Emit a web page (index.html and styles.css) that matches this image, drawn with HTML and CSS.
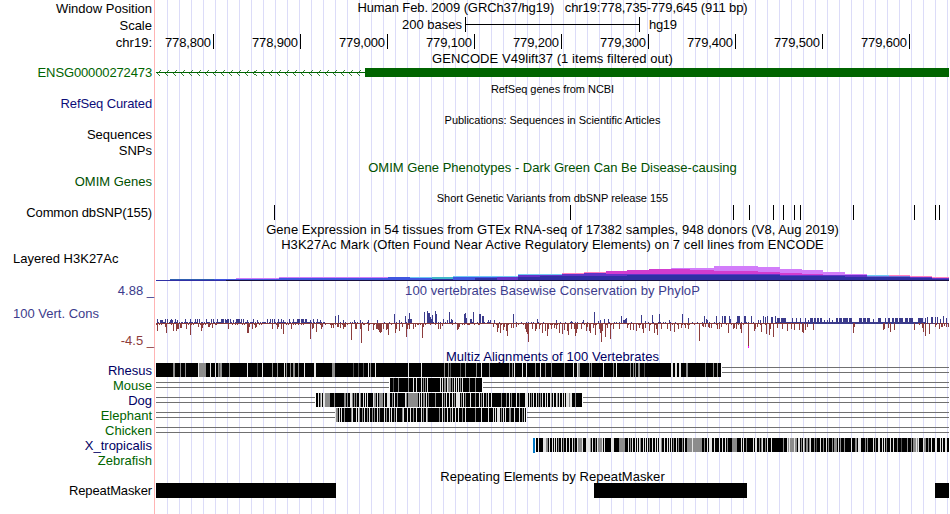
FILE: index.html
```html
<!DOCTYPE html>
<html lang="en">
<head>
<meta charset="utf-8">
<title>Human hg19 chr19:778,735-779,645</title>
<link rel="stylesheet" href="styles.css">
</head>
<body>
<main class="browser" id="browser"></main>
<script src="tracks.js"></script>
</body>
</html>
```
FILE: styles.css
```css
* { box-sizing: border-box; }
body {
  margin: 0;
  background: #fff;
  color: #000;
  font-family: "Liberation Sans", Arial, sans-serif;
  font-size: 13px;
}
.browser {
  width: 949px;
  height: 514px;
  overflow: hidden;
  background:
    linear-gradient(#ffb4b4, #ffb4b4) 154px 0 / 1px 100% no-repeat,
    repeating-linear-gradient(90deg, #dcdcf8 0 1px, transparent 1px 12px) 167px 0 / 782px 100% no-repeat;
}
.row {
  display: grid;
  grid-template-columns: 156px 793px;
}
.label {
  display: flex;
  flex-direction: column;
  justify-content: flex-start;
  padding-right: 4px;
  text-align: right;
  white-space: pre;
  line-height: 15px;
}
.label.left { text-align: left; padding-left: 13px; }
.label.spread { justify-content: space-between; padding-top: 8px; padding-right: 2px; }
.track { height: 100%; line-height: 17px; text-align: center; white-space: pre; letter-spacing: 0.06px; }
.track svg { display: block; letter-spacing: 0; }
.track.small { font-size: 11px; letter-spacing: -0.04px; }
.track.upper { line-height: 15px; }
.label.raised { line-height: 13px; }
.label.lowered { line-height: 17px; }
.label.lowest { line-height: 18px; }
.green { color: #006400; }
.omim { color: #005000; }
.refseq { color: #0c0c78; }
.navy { color: #000064; }
.cons { color: #3c3c8c; }
.brown { color: #8c3c3c; text-align: right; }
.label.tight { letter-spacing: -0.13px; }
.track.tight { letter-spacing: -0.09px; }
.track.plain { letter-spacing: 0; }
.limit { padding-right: 2px; }
svg text { font-family: "Liberation Sans", Arial, sans-serif; font-size: 13px; }
```
FILE: tracks.js
```js
const root = document.getElementById('browser');
const rect = (x, y, w, h, c) => `<rect x="${x}" y="${y}" width="${w}" height="${h}" fill="${c}"/>`;
let top_ = 0;

// Adds one row; drawings use image coordinates through the viewBox.
function row(h, label, body, labelClass = '', bodyClass = '') {
  const isDrawing = body.startsWith('<');
  const content = isDrawing
    ? `<svg width="793" height="${h}" viewBox="156 ${top_} 793 ${h}" shape-rendering="crispEdges">${body}</svg>`
    : body;
  root.insertAdjacentHTML('beforeend',
    `<div class="row" style="height:${h}px"><div class="label ${labelClass}">${label}</div><div class="track ${bodyClass}">${content}</div></div>`);
  top_ += h;
}

row(17, 'Window Position', 'Human Feb. 2009 (GRCh37/hg19)   chr19:778,735-779,645 (911 bp)', 'lowest', 'upper tight');
row(17, 'Scale', rect(465, 17, 1, 15, '#000') + rect(465, 24, 174, 1, '#000') + rect(639, 17, 1, 15, '#000') +
  '<text x="402" y="29" textLength="60">200 bases</text><text x="649" y="29" textLength="28">hg19</text>', 'lowered');
let ruler = '';
for (let i = 0; i < 9; i++) {
  const n = 778800 + i * 100, x = 213 + i * 87;
  ruler += `<text x="${x - 48}" y="47" textLength="46">${n.toLocaleString('en-US')}</text>` + rect(x, 34, 1, 15, '#000');
}
row(17, 'chr19:', ruler, 'lowered');
row(15, '', 'GENCODE V49lift37 (1 items filtered out)', '', 'upper');
let gene = rect(156, 72, 210, 1, '#006400') + rect(365, 68, 584, 9, '#006400');
for (let x = 157; x < 362; x += 8) gene += `<path d="M${x + 3.5} 69.5L${x + .5} 72.5L${x + 3.5} 75.5" fill="none" stroke="#006400" stroke-width=".8"/>`;
row(15, 'ENSG00000272473', gene, 'green raised tight');
row(16, '', 'RefSeq genes from NCBI', '', 'small');
row(15, 'RefSeq Curated', '', 'refseq raised tight');
row(16, '', 'Publications: Sequences in Scientific Articles', '', 'small');
row(15, 'Sequences', '', 'raised');
row(16, 'SNPs', '');
row(16, '', 'OMIM Gene Phenotypes - Dark Green Can Be Disease-causing', '', 'omim plain');
row(15, 'OMIM Genes', '', 'omim raised');
row(14, '', 'Short Genetic Variants from dbSNP release 155', '', 'small');
row(17, 'Common dbSNP(155)', [274, 570, 733, 749, 773, 783, 794, 800, 853, 914, 935, 939].map(x => rect(x, 205, 1, 15, '#000')).join(''), 'lowered tight');
row(15, '', 'Gene Expression in 54 tissues from GTEx RNA-seq of 17382 samples, 948 donors (V8, Aug 2019)');
row(14, '', 'H3K27Ac Mark (Often Found Near Active Regulatory Elements) on 7 cell lines from ENCODE');

// Stepped layers: [start, end, top, colour]
const V = '#d27dfa', M = '#d23ccf', P = '#6432c8', N = '#3030a5', B = '#4056e0', C = '#70c8f4', K = '#ff80c0';
row(33, 'Layered H3K27Ac', [
  [170, 214, 279, '#2f5fb0'], [214, 236, 279, B], [236, 279, 278, V], [236, 279, 279, B],
  [279, 388, 277, V], [279, 388, 278, B], [388, 410, 277, B], [410, 432, 277, C], [410, 432, 278, B],
  [432, 453, 277, '#40b8c8'], [432, 453, 279, N], [453, 518, 276, C], [453, 497, 277, B], [475, 518, 278, N], [497, 518, 277, P],
  [518, 562, 274, C], [518, 562, 275, P], [518, 540, 277, N], [540, 562, 276, N],
  [562, 584, 273, K], [562, 584, 274, P], [562, 584, 276, N],
  [584, 606, 272, K], [584, 606, 273, P], [606, 627, 271, M], [627, 649, 270, M], [649, 671, 269, M],
  [671, 714, 268, V], [671, 690, 269, M], [690, 714, 270, M],
  [714, 758, 266, V], [714, 758, 271, M], [758, 780, 267, V], [758, 780, 272, M],
  [780, 802, 269, V], [780, 802, 273, M], [802, 823, 270, V], [802, 823, 274, M],
  [823, 845, 272, V], [823, 845, 275, M], [845, 867, 274, V], [845, 867, 275, M],
  [867, 889, 275, C], [889, 910, 275, K], [910, 932, 276, K], [932, 949, 277, K],
  [606, 780, 274, P], [780, 867, 275, P], [867, 910, 276, '#7070d8'], [910, 932, 277, P], [932, 949, 278, P],
  [584, 627, 276, N], [627, 780, 275, N], [780, 845, 276, N], [845, 910, 277, N], [910, 932, 278, N], [932, 949, 279, N]
].map(([a, b, t, c]) => rect(a, t, b - a, 280 - t, c)).join('') +
  rect(156, 280, 70, 1, N) + rect(226, 280, 723, 1, '#181040'), 'left lowered');
row(15, '4.88 _', '100 vertebrates Basewise Conservation by PhyloP', 'cons limit', 'cons upper');

// Conservation scores: tile origin, then "offset:level" at three units per pixel.
const up = {
  150: '22:178 30:180 33:180 36:180 45:178 52:178 60:180 63:178 66:180 75:178 82:180 105:178 121:178 135:178 142:178 148:178 168:178 184:178 190:178 202:178 214:178 217:178 220:178 226:178 229:180 232:178 235:178 241:178 250:180 259:178 262:178 265:178 268:178 274:178 280:178 292:180 310:178 322:180 352:178 361:178 367:178 373:178 385:178 394:178 400:180 418:178 430:178 442:178 445:178 448:178 454:178 457:178 460:178 466:178 469:178 480:180 490:178 502:178 510:180 556:168 565:165 580:180 613:180 631:180 655:182 682:180 733:162 748:182 766:168 775:178 778:160 781:178 784:178',
  420: '13:158 22:155 25:160 28:160 31:172 34:178 37:165 46:155 49:163 70:178 82:180 88:157 94:178 97:182 133:162 136:160 139:174 151:178 154:178 160:157 179:162 182:162 188:168 191:170 205:182 211:182 223:180 280:163 352:178 409:182 454:184 490:180 523:157 535:183 541:180 553:178 565:178 604:168 610:180 613:180 616:178 619:174 664:165 676:184 697:165 718:163 748:182 788:163 806:174',
  690: '43:168 49:178 52:180 79:168 97:168 103:168 106:168 118:168 121:178 142:170 145:168 148:170 163:170 166:170 184:168 205:182 211:180 220:170 226:172 232:170 245:172 247:172 255:170 262:174 265:174 268:174 307:174 319:174 331:174 346:174 355:180 361:174 364:174 367:174 403:180 412:180 418:174 426:180 550:178 586:174 706:174 712:172 724:172 727:172 736:172 742:172 751:178 760:170 770:174'
};
const down = {
  150: '22:212 34:194 45:200 49:218 70:212 79:212 82:206 85:208 92:203 94:203 109:206 121:224 124:196 145:200 154:212 157:204 175:200 178:200 187:205 199:196 235:206 256:196 292:218 295:218 298:200 307:208 317:203 319:200 334:196 367:206 382:206 385:200 394:206 400:221 424:206 436:196 454:196 481:236 487:206 490:203 499:215 514:206 517:200 545:203 550:203 562:200 565:202 571:203 580:206 583:200 586:200 604:239 616:206 619:206 631:206 634:248 640:196 655:212 670:209 679:206 682:206 685:209 688:215 691:220 694:215 700:206 709:209 712:206 715:224 736:218 739:206 748:212 757:200 769:230 772:206 778:206 790:206 796:200 802:196',
  420: '7:234 10:200 55:208 61:206 67:198 112:210 115:206 118:200 145:196 175:196 220:200 232:215 235:203 241:219 250:209 253:200 259:212 262:228 274:203 280:203 289:200 316:206 319:215 322:222 325:246 337:208 346:212 349:206 358:206 367:218 376:212 382:228 385:206 394:206 403:203 409:208 418:220 427:222 433:210 442:212 445:225 454:206 463:206 466:228 469:218 472:206 484:206 499:212 502:200 508:212 511:218 520:203 526:224 538:206 541:218 544:246 547:212 556:230 562:203 571:236 580:206 598:206 622:203 631:209 640:209 649:212 658:203 667:206 670:220 676:203 688:212 703:218 709:206 712:224 724:206 742:206 752:212 763:215 775:206 784:203 796:203 805:206',
  690: '29:242 37:197 40:200 47:200 55:200 58:203 64:203 83:206 88:206 95:200 115:218 131:206 134:203 139:206 151:206 154:218 176:258 193:212 196:206 202:200 214:215 229:222 238:224 241:206 250:230 262:203 277:206 292:212 304:206 313:209 328:209 337:215 340:218 346:209 352:200 370:209 490:218 493:200 580:209 583:206 595:203 601:215 613:209 673:209 697:203 700:215 706:228 718:222 736:200 748:206 754:200 757:200 763:198 769:200 775:200'
};
const blocks = [[275, 290], [373, 379], [382, 388], [391, 398], [438, 445], [448, 458], [460, 475], [478, 488], [508, 517], [520, 528], [532, 541], [565, 575], [595, 601], [607, 613], [616, 626], [628, 640], [645, 654], [658, 670], [684, 700]];
let wig = '';
for (let x = 156; x < 949; x++) {
  const k = (x * 37 + (x >> 2) * 13) % 11;
  const raised = x < 325 ? k < 7 : x < 775 ? k < 2 : x < 925;
  if (raised) wig += rect(x, 322, 1, 1, '#3c3c8c');
  if (x < 770 ? k > 4 : x > 917 && k > 4) wig += rect(x, 323, 1, k > 8 ? 2 : 1, '#8c3c3c');
  else wig += rect(x, 323, 1, 1, x > 800 ? '#3c3c8c' : '#8c3c3c');
}
for (const [a, b] of blocks) wig += rect(690 + Math.floor(a / 3), 318, Math.round((b - a) / 3), 5, '#3c3c8c');
for (const o in up) for (const p of up[o].split(' ')) {
  const [x, y] = p.split(':').map(Number), t = 260 + Math.floor(y / 3);
  wig += rect(+o + Math.floor(x / 3), t, 1, 323 - t, '#3c3c8c');
}
for (const o in down) for (const p of down[o].split(' ')) {
  const [x, y] = p.split(':').map(Number);
  wig += rect(+o + Math.floor(x / 3), 323, 1, Math.round(y / 3) - 63, '#8c3c3c');
}
wig += rect(748, 346, 1, 2, '#ff00ff');
row(50, '<span class="cons">100 Vert. Cons</span><span class="brown">-4.5 _</span>', wig, 'left spread');
row(15, '', 'Multiz Alignments of 100 Vertebrates', '', 'navy');

// Alignment density: offsets (optionally ranges) with shade w, g or d.
const shade = { w: '#e4e4e4', g: '#8c8c8c', d: '#505050' };
function align(name, cls, start, end, tiles) {
  const y = top_;
  let s = '';
  if (name !== 'Zebrafish' && name !== 'X_tropicalis') s += rect(156, y + 4, 793, 1, '#707070') + rect(156, y + 9, 793, 1, '#707070');
  if (end) {
    s += rect(start - 1, y, end - start + 2, 14, '#fff') + rect(start, y, end - start, 14, '#000');
    for (const o in tiles) for (const m of tiles[o].split(' ')) {
      const [a, b] = m.slice(0, -1).split('-').map(Number);
      s += rect(+o + Math.floor(a / 3), y, b ? Math.round((b - a) / 3) : 1, 14, shade[m.slice(-1)]);
    }
  }
  if (name === 'X_tropicalis') s += rect(533, y, 2, 15, '#0078c8');
  row(15, name, s || '<g></g>', cls);
}
align('Rhesus', 'navy', 156, 721, {
  150: '69-75g 90g 105g 144w 147-168g 180w 195w 204g 207d 210-216g 237g 291w 321d 336w 366g 381g 402w 408g 420g 429-435g 444g 462w 492-498w 546-555g',
  350: '9d 24d 39d 54w 60g 75w 174w 213w 282g 294g 300d 330d 345g 378g 393w 417g 477g 486g 492w 516w 528w 555g 570w 585g',
  550: '3g 42g 69w 81w 84-90g 117g 123g 159w 189g 198w 240g 249g 255g 264-270g 282d 363-369w 375-381w 387-393w 408-414g 465g 489g 501g'
});
align('Mouse', 'green', 390, 482, { 350: '129d 144g 174g 189w 198w 213w 219g 225g 231w 270w 276w 282g 285g 291w 294-303g 306g 312w 318w 324w 330g 336w 357g 375g' });
align('Dog', 'navy', 316, 582, {
  150: '504w 510g 513w 519w 522w 525-540g 552g 582-588g 591g',
  350: '0-6w 6g 12g 18g 27w 30g 39w 45w 51w 69w 72-78g 81w 87-99g 102w 111-120w 126g 132w 141g 165w 168g 174-204g 207w 213w 219g 222g 228w 234g 255g 276w 282g 288w 297w 306w 312g 318w 321-330w 333g 339w 345g 360w 375g 387w 393g 399w 408g 414w 423w 453g 468g 477w 483g 498w 507g 525-534w 537w 543g 549w 558w 564g 570g 576w 585w 591w',
  550: '0w 3g 9w 18w 21g 27w 36w 42w 48-57w 57g 60-66w 75g'
});
align('Elephant', 'green', 336, 526, {
  150: '555w 558-564g 567w 573w 582g',
  350: '3g 6w 18w 24w 27g 36g 42w 51g 57w 66g 72g 81w 87g 102w 108g 117w 123w 132g 138w 156g 159w 171w 180w 189g 198w 213w 219g 228w 231g 267g 276w 282g 291w 300g 306w 315w 324w 336g 345w 375g 393w 414w 429w 435w 441-450w 453g 459w 465w 477-483g 492w 507w 516g 522w'
});
align('Chicken', 'green');
align('X_tropicalis', 'navy', 536, 949, {
  350: '564w 579-588w 588-594g 597w',
  550: '6w 12w 18w 24g 33w 39g 48w 57w 66w 72g 81w 84-96g 96w 108-120w 120g 126w 135g 141w 144-156g 156w 162w 183-192w 207-225g 234w 240g 246w 255w 261w 267w 270g 279w 285w 291w 297g 306w 315w 321w 327-333w 333g 342w 351w 357w 363w 369g 378w 384g 396g 402w 411-426g 426w 429-456g 462g 471w 477-486w 492w 507w 516w 525w 531g 546-561g 573w 579w 588g',
  750: '9w 15-21w 27g 33g 36w 45g 51w 63w 99g 111w 114g 117w 120-132g 132w 135-141g 144-150w 153g 159w 162g 168-174g 177g 180w 192g 198d 210w 219g 228w 234g 246g 252-261g 264w 270g 282g 303w 315-321g 324w 327-333w 345g 351g 369w 375g 384-390w 396w 402w 408g 420w 429w 441g 453d 471g 483g 489g 492-498g 498w 501g 504w 519w 522-528g 534g 543w 555-561w 570w 576w 585w 588w'
});
align('Zebrafish', 'green');
row(15, '', 'Repeating Elements by RepeatMasker');
row(16, 'RepeatMasker', rect(156, 483, 180, 15, '#000') + rect(594, 483, 153, 15, '#000') + rect(935, 483, 14, 15, '#000'), 'tight');
```
